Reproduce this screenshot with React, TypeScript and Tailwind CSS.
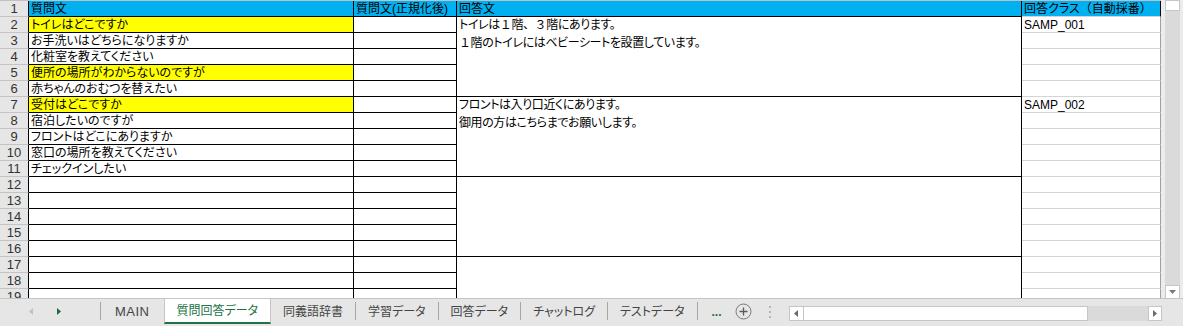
import React from "react";

const F = "font-['Liberation_Sans','Noto_Sans_CJK_JP',sans-serif] [font-feature-settings:'palt']";

const questions: { t: string; y?: boolean }[] = [
  { t: "トイレはどこですか", y: true },
  { t: "お手洗いはどちらになりますか" },
  { t: "化粧室を教えてください" },
  { t: "便所の場所がわからないのですが", y: true },
  { t: "赤ちゃんのおむつを替えたい" },
  { t: "受付はどこですか", y: true },
  { t: "宿泊したいのですが" },
  { t: "フロントはどこにありますか" },
  { t: "窓口の場所を教えてください" },
  { t: "チェックインしたい" },
  { t: "" },
  { t: "" },
  { t: "" },
  { t: "" },
  { t: "" },
  { t: "" },
  { t: "" },
  { t: "" },
];

const classes: Record<number, string> = { 0: "SAMP_001", 5: "SAMP_002" };

const rowHead =
  "bg-[#e6e6e6] border-r border-b border-r-black border-b-[#c4c4c4] flex items-center justify-center text-[13px] text-[#333] font-['Liberation_Sans',sans-serif] leading-none";
const cellBlack = "border-r border-b border-black flex items-center pl-[2px] text-[12px] text-black whitespace-nowrap overflow-hidden";

const N = "[font-feature-settings:normal]";

function Answer({ i }: { i: number }) {
  if (i === 0)
    return (
      <>
        <div>
          トイレは<span className={N}>１</span>階<span className={N}>、３</span>階にあります。
        </div>
        <div>
          <span className={N}>１</span>階のトイレにはベビーシートを設置しています。
        </div>
      </>
    );
  if (i === 1)
    return (
      <>
        <div>フロントは入り口近くにあります。</div>
        <div>御用の方はこちらまでお願いします。</div>
      </>
    );
  return null;
}

function Sep() {
  return <div className="w-px h-[18px] mt-[3px] bg-[#a6a6a6] shrink-0" />;
}

function Tab({ label, px = "px-3" }: { label: string; px?: string }) {
  return (
    <div className={`h-[25px] ${px} flex items-center text-[12px] text-[#444] shrink-0`}>{label}</div>
  );
}

export default function App() {
  return (
    <div className={`w-[1183px] h-[326px] flex flex-col bg-[#e6e6e6] overflow-hidden ${F}`}>
      <div className="flex h-[298px]">
        <div className="w-[1161px] h-[298px] overflow-hidden border-t border-[#c0c0c0] bg-white">
          <div className="grid grid-cols-[29px_325px_103px_565px_139px] auto-rows-[16px]">
            <div className={rowHead}>1</div>
            <div className={`${cellBlack} bg-[#00b0f0]`}>質問文</div>
            <div className={`${cellBlack} bg-[#00b0f0]`}>質問文(正規化後)</div>
            <div className={`${cellBlack} bg-[#00b0f0]`}>回答文</div>
            <div className="border-r border-b border-r-black border-b-[#d4d4d4] bg-[#00b0f0] flex items-center pl-[2px] text-[12px] text-black whitespace-nowrap overflow-hidden">
              回答クラス<span className={N}>（</span>自動採番<span className={N}>）</span>
            </div>
            {questions.map((q, i) => (
              <React.Fragment key={i}>
                <div className={rowHead}>{i + 2}</div>
                <div className={`${cellBlack} ${q.y ? "bg-[#ffff00]" : "bg-white"}`}>{q.t}</div>
                <div className={`${cellBlack} bg-white`}></div>
                {i % 5 === 0 && (
                  <div className="row-span-5 border-r border-b border-black pl-[2px] text-[12px] text-black leading-[18px] tracking-[-0.4px] whitespace-nowrap overflow-hidden">
                    <div className="-mt-px">
                      <Answer i={i / 5} />
                    </div>
                  </div>
                )}
                <div className="border-r border-b border-r-[#a0a0a0] border-b-[#d4d4d4] flex items-center pl-[2px] text-[12px] text-black whitespace-nowrap">
                  {classes[i] ?? ""}
                </div>
              </React.Fragment>
            ))}
          </div>
        </div>
        <div className="w-[22px] h-[298px] bg-[#ececec] pl-[4px] pr-[3px] flex">
          <div className="w-[15px] h-[298px] bg-[#dadada] flex flex-col justify-between">
            <div className="h-[11px] bg-white border border-[#c6c6c6]" />
            <div className="h-[14px] mb-[-1px] bg-white border border-[#c6c6c6] flex items-center justify-center">
              <svg width="7" height="4" viewBox="0 0 7 4">
                <path d="M0 0 L7 0 L3.5 4 Z" fill="#7a7a7a" />
              </svg>
            </div>
          </div>
        </div>
      </div>
      <div className="h-[28px] border-t border-[#c6c6c6] flex items-start bg-[#e6e6e6]">
        <div className="w-[100px] h-[25px] flex items-center shrink-0">
          <svg className="ml-[29px]" width="4" height="7" viewBox="0 0 4 7">
            <path d="M4 0 L4 7 L0 3.5 Z" fill="#c0c0c0" />
          </svg>
          <svg className="ml-[24px]" width="4" height="7" viewBox="0 0 4 7">
            <path d="M0 0 L0 7 L4 3.5 Z" fill="#1e6b3c" />
          </svg>
        </div>
        <Sep />
        <Tab label="MAIN" px="px-[14px] tracking-[0.5px] text-[13px]" />
        <div className="h-[25px] px-3 bg-white border-x border-[#c6c6c6] border-b-2 border-b-[#217346] flex items-center text-[12px] text-[#217346] shrink-0">
          質問回答データ
        </div>
        <Tab label="同義語辞書" />
        <Sep />
        <Tab label="学習データ" />
        <Sep />
        <Tab label="回答データ" />
        <Sep />
        <Tab label="チャットログ" />
        <Sep />
        <Tab label="テストデータ" />
        <Sep />
        <div className="h-[25px] ml-[14px] flex items-center text-[12px] font-bold text-[#217346] shrink-0">...</div>
        <div className="h-[25px] ml-[13px] flex items-center shrink-0">
          <svg width="17" height="17" viewBox="0 0 17 17">
            <circle cx="8.5" cy="8.5" r="7.5" fill="none" stroke="#7a7a7a" strokeWidth="1" />
            <path d="M8.5 4.5 V12.5 M4.5 8.5 H12.5" stroke="#5a5a5a" strokeWidth="1.3" />
          </svg>
        </div>
        <div className="h-[25px] ml-[17px] flex items-center shrink-0">
          <svg width="2" height="12" viewBox="0 0 2 12">
            <rect x="0" y="0" width="2" height="2" fill="#b4b4b4" />
            <rect x="0" y="5" width="2" height="2" fill="#b4b4b4" />
            <rect x="0" y="10" width="2" height="2" fill="#b4b4b4" />
          </svg>
        </div>
        <div className="ml-[18px] mr-[21px] mt-[7px] flex-1 h-[15px] flex bg-[#dadada]">
          <div className="w-[15px] h-[15px] bg-white border border-[#c6c6c6] flex items-center justify-center shrink-0">
            <svg width="4" height="7" viewBox="0 0 4 7">
              <path d="M4 0 L4 7 L0 3.5 Z" fill="#6a6a6a" />
            </svg>
          </div>
          <div className="w-[284px] h-[15px] bg-white border-y border-r border-[#c6c6c6] shrink-0" />
          <div className="flex-1" />
          <div className="w-[14px] h-[15px] bg-white border border-[#c6c6c6] flex items-center justify-center shrink-0">
            <svg width="4" height="7" viewBox="0 0 4 7">
              <path d="M0 0 L0 7 L4 3.5 Z" fill="#6a6a6a" />
            </svg>
          </div>
        </div>
      </div>
    </div>
  );
}
